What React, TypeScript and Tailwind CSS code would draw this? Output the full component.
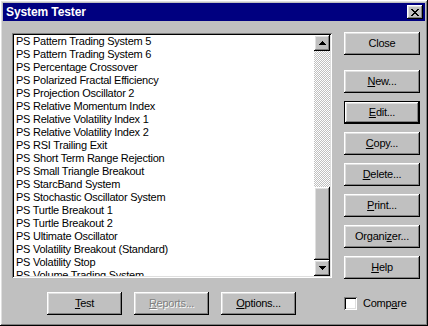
import React from "react";

const raised =
  "shadow-[inset_-1px_-1px_#000,inset_1px_1px_#fff,inset_-2px_-2px_#808080,inset_2px_2px_#dfdfdf]";
const sunken =
  "shadow-[inset_1px_1px_#808080,inset_-1px_-1px_#fff,inset_2px_2px_#000,inset_-2px_-2px_#dfdfdf]";

const items = [
  "PS Pattern Trading System 5",
  "PS Pattern Trading System 6",
  "PS Percentage Crossover",
  "PS Polarized Fractal Efficiency",
  "PS Projection Oscillator 2",
  "PS Relative Momentum Index",
  "PS Relative Volatility Index 1",
  "PS Relative Volatility Index 2",
  "PS RSI Trailing Exit",
  "PS Short Term Range Rejection",
  "PS Small Triangle Breakout",
  "PS StarcBand System",
  "PS Stochastic Oscillator System",
  "PS Turtle Breakout 1",
  "PS Turtle Breakout 2",
  "PS Ultimate Oscillator",
  "PS Volatility Breakout (Standard)",
  "PS Volatility Stop",
  "PS Volume Trading System",
];

function Btn({
  pre = "",
  u = "",
  post = "",
  isDefault = false,
  disabled = false,
  className = "",
}: {
  pre?: string;
  u?: string;
  post?: string;
  isDefault?: boolean;
  disabled?: boolean;
  className?: string;
}) {
  const inner = (
    <div
      className={`flex-1 h-full flex items-center justify-center bg-[#c0c0c0] ${raised} ${
        disabled ? "text-[#808080] [text-shadow:1px_1px_0_#fff]" : "text-black"
      }`}
    >
      <span>
        {pre}
        {u && <u className="underline-offset-[1px]">{u}</u>}
        {post}
      </span>
    </div>
  );
  return (
    <div className={`h-[23px] flex ${isDefault ? "border border-black" : ""} ${className}`}>
      {inner}
    </div>
  );
}

function Arrow({ up }: { up?: boolean }) {
  return (
    <svg width="7" height="4" viewBox="0 0 7 4">
      {up ? (
        <path d="M3 0h1v1h1v1h1v1h1v1H0V3h1V2h1V1h1z" fill="#000" />
      ) : (
        <path d="M0 0h7v1H6v1H5v1H4v1H3V3H2V2H1V1H0z" fill="#000" />
      )}
    </svg>
  );
}

export default function App() {
  return (
    <div
      className={`w-[428px] h-[326px] bg-[#c0c0c0] p-[3px] flex flex-col text-[11px] tracking-[-0.25px] ${raised}`}
      style={{ fontFamily: '"Liberation Sans", Arial, sans-serif' }}
    >
      {/* Title bar */}
      <div className="h-[18px] bg-[#000080] flex items-center justify-between pl-[3px] pr-[2px]">
        <span className="text-white font-bold text-[12px] tracking-[-0.1px] leading-none">
          System Tester
        </span>
        <div
          className={`w-[16px] h-[14px] bg-[#c0c0c0] flex items-center justify-center ${raised}`}
        >
          <svg width="8" height="7" viewBox="0 0 8 7">
            <path
              d="M0 0h2v1h1v1h2V1h1V0h2v1H7v1H6v1H5v1h1v1h1v1h1v1H6V6H5V5H3v1H2v1H0V6h1V5h1V4h1V3H2V2H1V1H0z"
              fill="#000"
            />
          </svg>
        </div>
      </div>

      {/* Body */}
      <div className="flex-1 flex flex-col pt-[11px] pl-[9px]">
        <div className="flex gap-[12px] items-start">
          {/* List box */}
          <div className={`mt-[1px] w-[320px] h-[245px] p-[2px] flex bg-white ${sunken}`}>
            <div className="flex-1 overflow-hidden bg-white">
              {items.map((t) => (
                <div
                  key={t}
                  className="h-[13px] leading-[13px] pl-[2px] whitespace-nowrap text-black"
                >
                  {t}
                </div>
              ))}
            </div>
            <div className="w-[16px] flex flex-col">
              <div
                className={`h-[16px] bg-[#c0c0c0] flex items-center justify-center ${raised}`}
              >
                <Arrow up />
              </div>
              <div className="flex-1 flex flex-col justify-end bg-[repeating-conic-gradient(#fff_0_25%,#c0c0c0_0_50%)] bg-[length:2px_2px]">
                <div className={`h-[73px] bg-[#c0c0c0] ${raised}`} />
              </div>
              <div
                className={`h-[16px] bg-[#c0c0c0] flex items-center justify-center ${raised}`}
              >
                <Arrow />
              </div>
            </div>
          </div>

          {/* Right buttons */}
          <div className="w-[76px] flex flex-col">
            <Btn pre="Close" />
            <div className="mt-[15px] flex flex-col gap-[8px]">
              <Btn u="N" post="ew..." />
              <Btn u="E" post="dit..." isDefault />
              <Btn u="C" post="opy..." />
              <Btn u="D" post="elete..." />
              <Btn u="P" post="rint..." />
              <Btn pre="Organi" u="z" post="er..." />
              <Btn u="H" post="elp" />
            </div>
          </div>
        </div>

        {/* Bottom row */}
        <div className="mt-[13px] flex items-center pl-[35px]">
          <Btn u="T" post="est" className="w-[75px]" />
          <Btn u="R" post="eports..." disabled className="w-[75px] ml-[12px]" />
          <Btn u="O" post="ptions..." className="w-[75px] ml-[12px]" />
          <div className="ml-[48px] flex items-center gap-[6px]">
            <div className={`w-[13px] h-[13px] bg-white ${sunken}`} />
            <span className="text-black">
              Comp<u className="underline-offset-[1px]">a</u>re
            </span>
          </div>
        </div>
      </div>
    </div>
  );
}
